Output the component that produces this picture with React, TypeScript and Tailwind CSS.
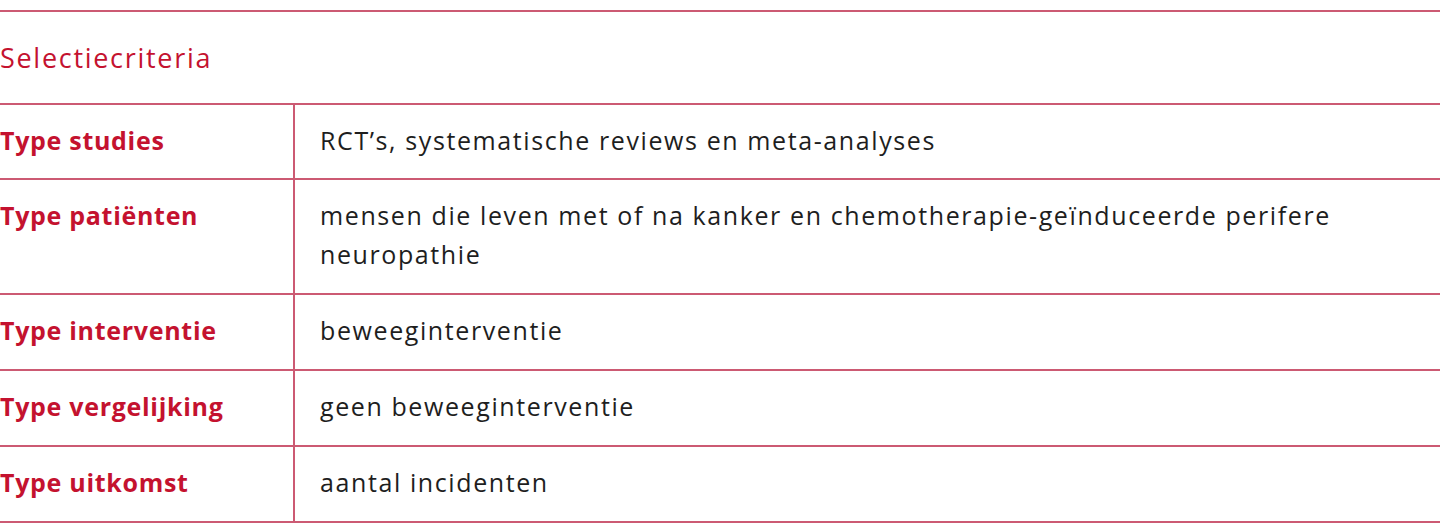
const rows: { label: string; value: string }[] = [
  { label: 'Type studies', value: 'RCT’s, systematische reviews en meta-analyses' },
  {
    label: 'Type patiënten',
    value: 'mensen die leven met of na kanker en chemotherapie-geïnduceerde perifere neuropathie',
  },
  { label: 'Type interventie', value: 'beweeginterventie' },
  { label: 'Type vergelijking', value: 'geen beweeginterventie' },
  { label: 'Type uitkomst', value: 'aantal incidenten' },
];

export default function App() {
  return (
    <div className="min-h-screen bg-white pt-[10px] font-['Open_Sans',sans-serif]">
      <div className="border-y-2 border-[#cc5a73]">
        <div className="flex h-[91px] items-center pt-[2px] text-[27px] tracking-[1.7px] text-[#c4122f]">
          Selectiecriteria
        </div>
        {rows.map((row, i) => (
          <div
            key={row.label}
            className={
              i === 0
                ? 'grid grid-cols-[293px_1fr] border-t-2 border-[#cc5a73] [&>div]:pb-[18px]'
                : 'grid grid-cols-[293px_1fr] border-t-2 border-[#cc5a73] [&>div]:pb-[19px]'
            }
          >
            <div className="pt-[16px] text-[25px] font-bold leading-[39px] tracking-[0.7px] text-[#c4122f]">
              {row.label}
            </div>
            <div className="border-l-2 border-[#cc5a73] pt-[16px] pl-[25px] pr-[60px] text-[25px] leading-[39px] tracking-[1.6px] text-[#1e1e1e]">
              {row.value}
            </div>
          </div>
        ))}
      </div>
    </div>
  );
}
